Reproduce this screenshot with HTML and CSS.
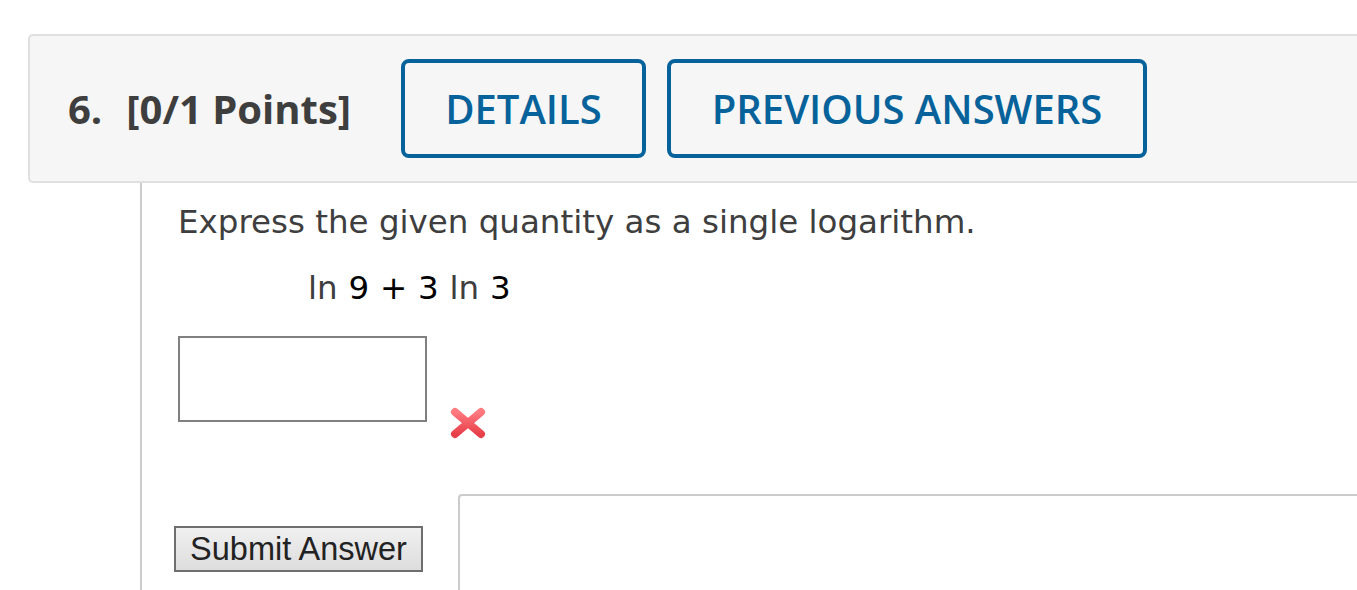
FILE: index.html
```html
<!DOCTYPE html>
<html lang="en">
<head>
<meta charset="utf-8">
<title>Question 6</title>
<link rel="stylesheet" href="styles.css">
</head>
<body>
<div class="question">
  <div class="q-header">
    <div class="q-title"><span class="q-num">6.</span><span class="q-points">[0/1 Points]</span></div>
    <button class="q-btn q-details">DETAILS</button>
    <button class="q-btn q-prev">PREVIOUS ANSWERS</button>
  </div>
  <div class="q-body">
    <p class="prompt">Express the given quantity as a single logarithm.</p>
    <p class="expr"><span class="fn">ln</span> 9 + 3 <span class="fn">ln</span> 3</p>
    <div class="answer-row">
      <input class="answer" type="text" aria-label="answer">
      <svg class="wrong" width="36" height="34" viewBox="0 0 36 34" aria-hidden="true">
        <defs>
          <linearGradient id="xg" x1="0" y1="0" x2="0" y2="1">
            <stop offset="0" stop-color="#ff7a80"/>
            <stop offset="1" stop-color="#e8404a"/>
          </linearGradient>
        </defs>
        <path d="M5 6 L31 28 M31 6 L5 28" stroke="url(#xg)" stroke-width="8" stroke-linecap="round"/>
      </svg>
    </div>
    <div class="submit-row">
      <button class="submit">Submit Answer</button>
      <div class="feedback"></div>
    </div>
  </div>
</div>
</body>
</html>
```
FILE: styles.css
```css
html, body {
  margin: 0;
  padding: 0;
  background: #fff;
}
body {
  overflow: hidden;
}
.question {
  padding-top: 34px;
  padding-left: 28px;
}
.q-header {
  display: flex;
  align-items: center;
  height: 145px;
  background: #f6f6f6;
  border: 2px solid #e0e0e0;
  border-right: none;
  border-radius: 5px 0 0 5px;
  padding-left: 38px;
  font-family: "Open Sans", sans-serif;
}
.q-title {
  font-weight: 700;
  font-size: 40px;
  color: #3e3e3e;
  width: 333px;
  white-space: nowrap;
}
.q-num {
  margin-right: 24px;
}
.q-btn {
  height: 99px;
  background: transparent;
  border: 4px solid #06629a;
  border-radius: 8px;
  color: #06629a;
  font-family: "Open Sans", sans-serif;
  font-weight: 600;
  font-size: 40px;
  padding: 0;
  box-sizing: border-box;
}
.q-details {
  width: 245px;
  margin-right: 21px;
}
.q-prev {
  width: 480px;
}
.q-body {
  margin-left: 112px;
  border-left: 2px solid #cccccc;
  padding-left: 36px;
  height: 420px;
  font-family: "DejaVu Sans", Verdana, sans-serif;
  color: #3e3e3e;
}
.prompt {
  margin: 0;
  padding-top: 20px;
  font-size: 32.5px;
  line-height: 38px;
}
.expr {
  margin: 28px 0 0 130px;
  font-size: 32.5px;
  line-height: 38px;
  color: #000;
  word-spacing: 0.5px;
}
.expr .fn {
  color: #3e3e3e;
}
.answer-row {
  display: flex;
  align-items: flex-end;
  margin-top: 29px;
}
.answer {
  width: 249px;
  height: 86px;
  box-sizing: border-box;
  border: 2px solid #808080;
  margin: 0;
  padding: 0;
}
.wrong {
  margin-left: 23px;
  margin-bottom: -18px;
}
.submit-row {
  display: flex;
  align-items: flex-end;
  margin-top: 72px;
}
.submit {
  width: 249px;
  height: 46px;
  margin-left: -4px;
  box-sizing: border-box;
  border: 2px solid #6e6e6e;
  background: linear-gradient(#f0f0f0, #dddddd);
  font-family: "Liberation Sans", Arial, sans-serif;
  font-size: 32.5px;
  color: #222;
  padding: 0;
  margin-bottom: 19px;
}
.feedback {
  margin-left: 35px;
  flex: 1;
  height: 95px;
  border: 2px solid #cccccc;
  border-right: none;
  border-bottom: none;
  border-radius: 4px 0 0 0;
}
```
